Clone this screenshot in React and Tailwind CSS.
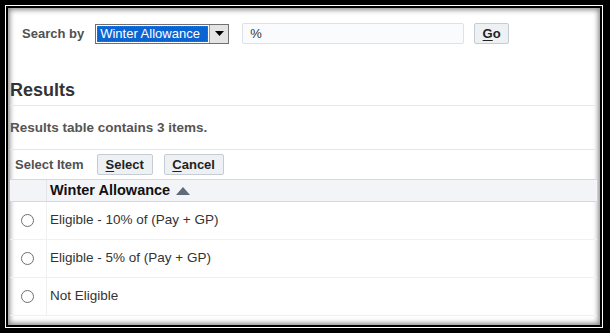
const rows = [
  "Eligible - 10% of (Pay + GP)",
  "Eligible - 5% of (Pay + GP)",
  "Not Eligible",
];

const Btn = ({ first, rest, className = "" }) => (
  <button
    className={`h-[21px] rounded-[2px] border border-[#c5ccd4] bg-[#eef1f4] text-[13px] font-bold text-[#222] leading-none ${className}`}
  >
    <span className="underline underline-offset-2">{first}</span>
    {rest}
  </button>
);

const App = () => {
  return (
    <div
      className="w-[610px] h-[333px] bg-black pt-[5px] pl-[5px] pr-[7px] pb-[5px]"
      style={{ fontFamily: '"Liberation Sans", Arial, sans-serif' }}
    >
      <div className="h-full border border-white">
        <div className="h-full border-2 border-black">
          <div className="h-full bg-white shadow-[inset_0_0_5px_2px_rgba(0,0,0,0.45)] pt-[15px] pl-[2px] pr-[3px] overflow-hidden">
            {/* Search row */}
            <div className="flex items-center h-[21px] pl-[12px]">
              <span className="text-[13px] font-bold text-[#505050]">Search by</span>
              <div className="ml-[11px] flex h-[20px] w-[134px] items-stretch border border-[#707070] bg-white">
                <div className="m-[1px] flex flex-1 items-center border border-dotted border-[#a06020] bg-[#0a64d2] px-[2px] text-[13px] text-white">
                  Winter Allowance
                </div>
                <div className="flex w-[19px] items-center justify-center border-l border-[#9a9a9a] bg-[#e4e4e4]">
                  <svg width="9" height="5" viewBox="0 0 9 5">
                    <path d="M0 0 L9 0 L4.5 5 Z" fill="#000" />
                  </svg>
                </div>
              </div>
              <div className="ml-[13px] flex h-[21px] w-[222px] items-center rounded-[2px] border border-[#dde2e8] bg-[#f9fbfd] pl-[7px] text-[13px] text-[#333]">
                %
              </div>
              <Btn first="G" rest="o" className="ml-[10px] w-[35px]" />
            </div>

            {/* Results header */}
            <div className="mt-[36px] text-[18px] font-bold text-[#333] leading-[20px]">Results</div>
            <div className="mt-[5px] border-b border-[#e3e7ec]" />
            <div className="mt-[15px] text-[13.5px] font-bold text-[#555] leading-[14px]">
              Results table contains 3 items.
            </div>
            <div className="mt-[14px] border-b border-[#e3e7ec]" />

            {/* Select row */}
            <div className="mt-[4px] flex items-center h-[21px] pl-[5px]">
              <span className="text-[13px] font-bold text-[#505050]">Select Item</span>
              <Btn first="S" rest="elect" className="ml-[13px] w-[56px]" />
              <Btn first="C" rest="ancel" className="ml-[11px] w-[60px]" />
            </div>

            {/* Table */}
            <div className="mt-[4px]">
              <div className="flex h-[23px] border-y border-[#d3d9e0] bg-[#f2f4f7]">
                <div className="w-[37px] border-r border-[#e3e7ec]" />
                <div className="flex items-center pl-[3px] text-[14.5px] font-bold text-[#111]">
                  Winter Allowance
                  <svg className="ml-[6px]" width="14" height="8" viewBox="0 0 14 8">
                    <path d="M0 8 L7 0 L14 8 Z" fill="#5f6b78" />
                  </svg>
                </div>
              </div>
              {rows.map((r) => (
                <div key={r} className="flex h-[38px] border-b border-[#eef0f3]">
                  <div className="flex w-[37px] items-center justify-center border-r border-[#eef0f3]">
                    <div className="mr-[2px] h-[13px] w-[13px] rounded-full border border-[#6f6f6f] bg-white" />
                  </div>
                  <div className="flex items-center pl-[3px] text-[13.5px] text-[#333]">{r}</div>
                </div>
              ))}
            </div>
          </div>
        </div>
      </div>
    </div>
  );
};

export default App;
